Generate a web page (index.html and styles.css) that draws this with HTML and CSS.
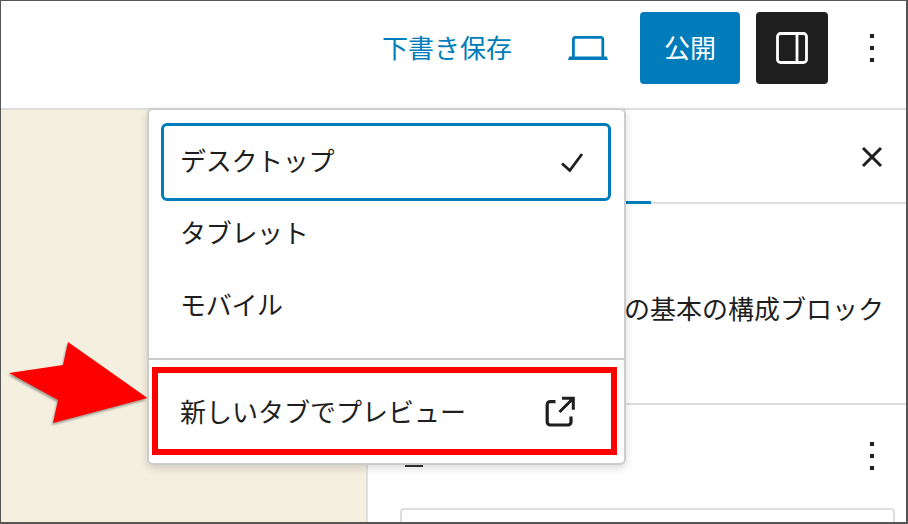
FILE: index.html
```html
<!DOCTYPE html>
<html lang="ja">
<head>
<meta charset="utf-8">
<title>プレビュー</title>
<link rel="stylesheet" href="styles.css">
</head>
<body>
<div class="app">
  <header class="topbar">
    <span class="draft">下書き保存</span>
    <span class="laptop">
      <svg viewBox="0 0 40 24" width="40" height="24"><path d="M5.400 21V3.500A2.200 2.200 0 0 1 7.600 1.400h25A2.200 2.200 0 0 1 34.800 3.500V21" fill="none" stroke="#007cba" stroke-width="2.800"/><path d="M0 24 1.200 20.500h37.600L40 24z" fill="#007cba"/></svg>
    </span>
    <span class="publish">公開</span>
    <span class="toggle">
      <svg viewBox="0 0 32 32" width="32" height="32"><rect x="1.500" y="1.500" width="29" height="29" rx="3" fill="none" stroke="#fff" stroke-width="2.800"/><path d="M21 2v28" stroke="#fff" stroke-width="2.800"/></svg>
    </span>
    <span class="more">
      <svg viewBox="0 0 24 24" width="48" height="48"><path d="M13 19h-2v-2h2v2zm0-6h-2v-2h2v2zm0-6h-2V5h2v2z" fill="#1e1e1e"/></svg>
    </span>
  </header>
  <div class="workspace">
    <main class="canvas"></main>
    <aside class="sidebar">
      <div class="tabs">
        <span class="tab-active"></span>
        <svg class="close" viewBox="0 0 24 24" width="24" height="24"><path d="M3 3l18 18M21 3L3 21" fill="none" stroke="#1e1e1e" stroke-width="3"/></svg>
      </div>
      <section class="description">
        <p>の基本の構成ブロック</p>
      </section>
      <section class="styles">
        <div class="styles-head">
          <span class="peek"></span>
          <svg viewBox="0 0 24 24" width="48" height="48"><path d="M13 19h-2v-2h2v2zm0-6h-2v-2h2v2zm0-6h-2V5h2v2z" fill="#1e1e1e"/></svg>
        </div>
        <div class="card"></div>
      </section>
    </aside>
  </div>

  <div class="menu">
    <div class="group">
      <div class="item selected">
        <span>デスクトップ</span>
        <svg class="icon-check" viewBox="0 0 24 24" width="24" height="24"><path d="M2 12.500 9.800 19.500 22 3" fill="none" stroke="#1e1e1e" stroke-width="2.800"/></svg>
      </div>
      <div class="item">タブレット</div>
      <div class="item">モバイル</div>
    </div>
    <div class="group preview">
      <div class="item wide">
        <span>新しいタブでプレビュー</span>
        <svg class="icon-external" viewBox="0 0 32 32" width="32" height="32"><path d="M10.500 5.600H5.200a3 3 0 0 0-3 3v17.400a3 3 0 0 0 3 3h17.800a3 3 0 0 0 3-3v-5.500" fill="none" stroke="#1e1e1e" stroke-width="3.200"/><path d="M17 2.200h11.300v11.500M14.500 16 28 2.500" fill="none" stroke="#1e1e1e" stroke-width="3"/></svg>
      </div>
      <div class="highlight"></div>
    </div>
  </div>

  <svg class="arrow" viewBox="0 0 150 90" width="150" height="90"><polygon points="9,31 63,23 68,0 147.500,56 53,81 58,58" fill="#f00"/></svg>
</div>
</body>
</html>
```

FILE: styles.css
```css
* { box-sizing: border-box; }
html, body { margin: 0; padding: 0; }
body {
  font-family: "Noto Sans CJK JP", "Noto Sans", sans-serif;
  color: #1e1e1e;
  font-size: 26px;
}
.app {
  position: relative;
  width: 908px;
  height: 524px;
  overflow: hidden;
  display: flex;
  flex-direction: column;
  border-style: solid;
  border-color: #555;
  border-width: 1px 2px 2px 1px;
  background: #fff;
}
.topbar {
  flex: none;
  height: 109px;
  border-bottom: 2px solid #ddd;
  display: flex;
  align-items: flex-start;
  padding: 11px 0 0 381px;
}
.draft {
  color: #007cba;
  height: 72px;
  line-height: 69px;
  width: 129px;
  white-space: nowrap;
}
.laptop {
  display: flex;
  align-items: center;
  height: 72px;
  margin-left: 57px;
}
.laptop svg { display: block; }
.publish {
  width: 100px;
  height: 72px;
  margin-left: 32px;
  background: #007cba;
  border-radius: 4px;
  color: #fff;
  line-height: 70px;
  text-align: center;
}
.toggle {
  width: 72px;
  height: 72px;
  margin-left: 16px;
  background: #1e1e1e;
  border-radius: 4px;
  display: flex;
  align-items: center;
  justify-content: center;
}
.more {
  margin-left: 20px;
  margin-top: 12px;
  height: 48px;
}
.more svg, .styles-head svg { display: block; }
.workspace {
  flex: 1;
  min-height: 0;
  display: flex;
}
.canvas {
  width: 365px;
  flex: none;
  background: #f5efe0;
}
.sidebar {
  flex: 1;
  min-width: 0;
  border-left: 2px solid #e0e0e0;
  display: flex;
  flex-direction: column;
}
.tabs {
  position: relative;
  height: 94px;
  flex: none;
  border-bottom: 2px solid #ddd;
  display: flex;
  justify-content: flex-end;
  align-items: center;
  padding-right: 22px;
}
.tab-active {
  position: absolute;
  left: 0;
  bottom: -2px;
  width: 283px;
  height: 3px;
  background: #007cba;
}
.close { display: block; margin-top: 2px; }
.description {
  height: 201px;
  flex: none;
  border-bottom: 2px solid #ddd;
  padding: 85px 22px 0 0;
}
.description p {
  margin: 0;
  text-align: right;
  line-height: 38px;
  white-space: nowrap;
}
.styles {
  flex: 1;
  min-height: 0;
  padding: 27px 11px 0 32px;
}
.styles-head {
  display: flex;
  justify-content: space-between;
  margin-right: -1px;
  height: 76px;
}
.peek {
  width: 18px;
  height: 2px;
  margin: 33px 0 0 5px;
  background: #333;
}
.card {
  height: 40px;
  border: 2px solid #ddd;
  border-radius: 4px;
}
.menu {
  position: absolute;
  left: 146px;
  top: 107px;
  width: 479px;
  height: 357px;
  background: #fff;
  border: 2px solid #ccc;
  border-radius: 6px;
  box-shadow: 0 3px 8px rgba(0, 0, 0, .15);
}
.group {
  padding: 13px 13px 17px 12px;
}
.item {
  height: 72px;
  padding: 0 0 2px 19px;
  display: flex;
  align-items: center;
  justify-content: space-between;
  line-height: 38px;
  letter-spacing: -.3px;
  white-space: nowrap;
}
.item svg { display: block; }
.selected {
  height: 78px;
  margin-bottom: -4px;
  border: 3px solid #007cba;
  border-radius: 6px;
  padding: 0 24px 4px 16px;
}
.icon-check { margin-top: 6px; }
.preview {
  position: relative;
  border-top: 2px solid #ccc;
  height: 103px;
  padding-top: 14px;
}
.preview .item { height: 76px; }
.wide { letter-spacing: 0; }
.icon-external { margin: 2px 34px 0 0; }
.highlight {
  position: absolute;
  left: 3px;
  top: 7px;
  width: 465px;
  height: 88px;
  border: 6px solid #f00;
}
.arrow {
  position: absolute;
  left: -1px;
  top: 341px;
  filter: drop-shadow(-1px 2px 1px rgba(0, 0, 0, .35));
  overflow: visible;
}
```
